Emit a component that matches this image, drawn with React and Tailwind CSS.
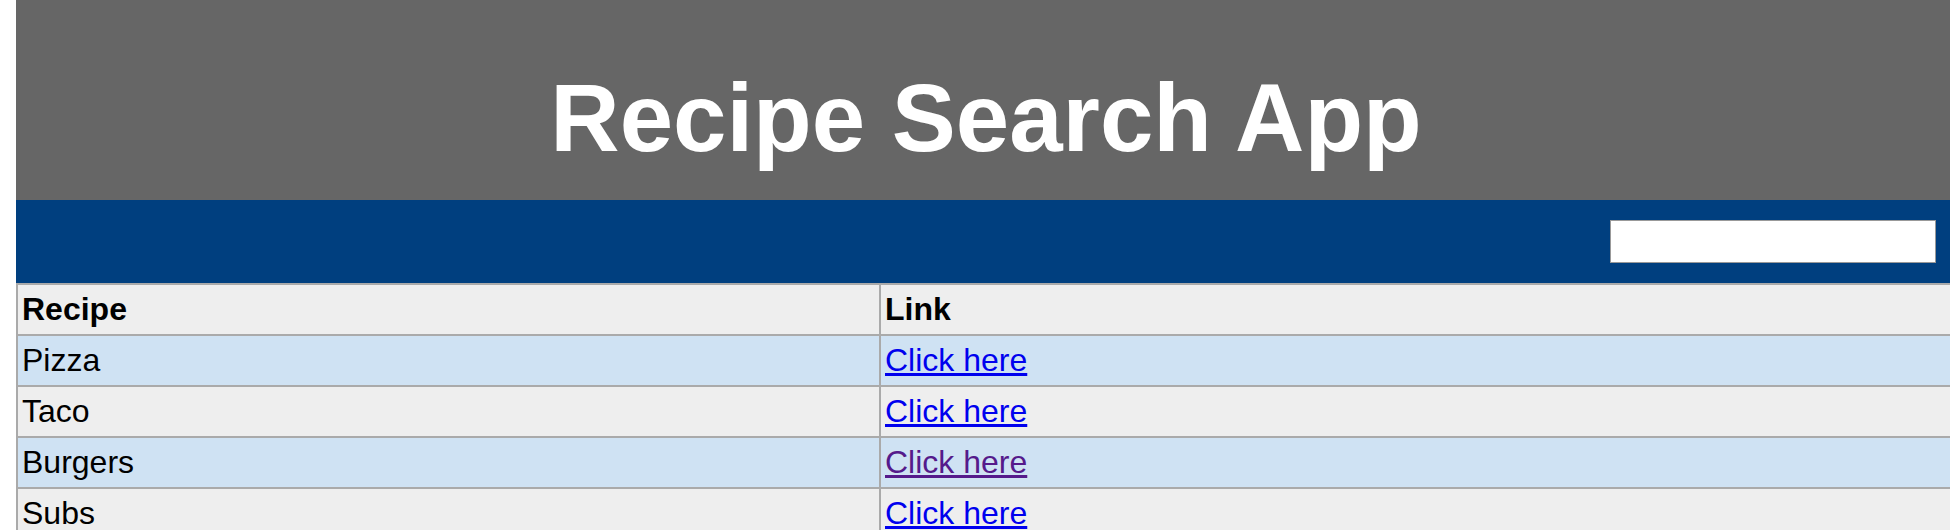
const recipes = [
  { name: 'Pizza', visited: false },
  { name: 'Taco', visited: false },
  { name: 'Burgers', visited: true },
  { name: 'Subs', visited: false },
]

export default function App() {
  return (
    <div className="h-[530px] w-full overflow-hidden bg-white pl-4 font-['Liberation_Sans',Arial,sans-serif]">
      <div className="w-[1940px]">
        <header className="h-[200px] bg-[#666666] pt-[63px] text-center">
          <h1 className="text-[96px] font-bold leading-[110px] text-white">Recipe Search App</h1>
        </header>
        <div className="flex h-[83px] items-center justify-end bg-[#003f7f] pr-[20px]">
          <input
            type="text"
            className="h-[43px] w-[326px] border border-[#999999] bg-white px-1 text-[16px] outline-none"
          />
        </div>
        <table className="w-full table-fixed border-collapse text-[32px] leading-[37px] text-black">
          <colgroup>
            <col className="w-[863px]" />
            <col />
          </colgroup>
          <thead>
            <tr className="bg-[#eeeeee]">
              <th className="border-2 border-[#aaaaaa] px-1 py-[6px] text-left font-bold">Recipe</th>
              <th className="border-2 border-[#aaaaaa] px-1 py-[6px] text-left font-bold">Link</th>
            </tr>
          </thead>
          <tbody>
            {recipes.map((r, i) => (
              <tr key={r.name} className={i % 2 === 0 ? 'bg-[#cfe2f3]' : 'bg-[#eeeeee]'}>
                <td className="border-2 border-[#aaaaaa] px-1 py-[6px]">{r.name}</td>
                <td className="border-2 border-[#aaaaaa] px-1 py-[6px]">
                  <a
                    href="#"
                    className={`underline ${r.visited ? 'text-[#551a8b]' : 'text-[#0000ee]'}`}
                  >
                    Click here
                  </a>
                </td>
              </tr>
            ))}
          </tbody>
        </table>
      </div>
    </div>
  )
}
